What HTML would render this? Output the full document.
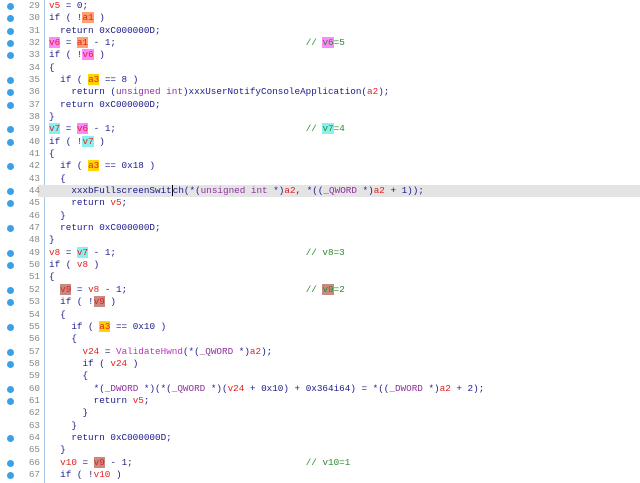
<!DOCTYPE html><html><head><style>
body{margin:0;width:640px;height:483px;background:#fff;overflow:hidden;font-family:"Liberation Mono",monospace;font-size:9.3px;}
.b{position:absolute;left:44px;top:0;width:1px;height:483px;background:#a8c8e8;}
.l{position:absolute;left:0;height:12.34px;line-height:12.34px;width:640px;white-space:pre;}
.d{position:absolute;left:7px;top:3px;width:7px;height:7px;border-radius:50%;background:#3aa0e8;}
.n{position:absolute;left:18px;width:22px;text-align:right;color:#888;}
.c{position:absolute;left:49px;color:#1a1a8c;}
.v{color:#e02020}.t{color:#9030a0}.m{color:#2a8a2a}.f{color:#c030c0}
.o{background:#ffa070}.p{background:#ff88ff}.y{background:#ffd400}.q{background:#88f0f0}.r{background:#c88a80}
.hl{background:#e4e4e4;}
</style></head><body>
<div class="b"></div>
<div class="l" style="top:0px"><span class="d"></span><span class="n">29</span><span class="c"><span class="v">v5</span> = 0;</span></div>
<div class="l" style="top:12.34px"><span class="d"></span><span class="n">30</span><span class="c">if ( !<span class="v o">a1</span> )</span></div>
<div class="l" style="top:24.68px"><span class="d"></span><span class="n">31</span><span class="c">  return 0xC000000D;</span></div>
<div class="l" style="top:37.02px"><span class="d"></span><span class="n">32</span><span class="c"><span class="v p">v6</span> = <span class="v o">a1</span> - 1;                                  <span class="m">// <span class="p">v6</span>=5</span></span></div>
<div class="l" style="top:49.36px"><span class="d"></span><span class="n">33</span><span class="c">if ( !<span class="v p">v6</span> )</span></div>
<div class="l" style="top:61.7px"><span class="n">34</span><span class="c">{</span></div>
<div class="l" style="top:74.04px"><span class="d"></span><span class="n">35</span><span class="c">  if ( <span class="v y">a3</span> == 8 )</span></div>
<div class="l" style="top:86.38px"><span class="d"></span><span class="n">36</span><span class="c">    return (<span class="t">unsigned int</span>)xxxUserNotifyConsoleApplication(<span class="v">a2</span>);</span></div>
<div class="l" style="top:98.72px"><span class="d"></span><span class="n">37</span><span class="c">  return 0xC000000D;</span></div>
<div class="l" style="top:111.06px"><span class="n">38</span><span class="c">}</span></div>
<div class="l" style="top:123.4px"><span class="d"></span><span class="n">39</span><span class="c"><span class="v q">v7</span> = <span class="v p">v6</span> - 1;                                  <span class="m">// <span class="q">v7</span>=4</span></span></div>
<div class="l" style="top:135.74px"><span class="d"></span><span class="n">40</span><span class="c">if ( !<span class="v q">v7</span> )</span></div>
<div class="l" style="top:148.08px"><span class="n">41</span><span class="c">{</span></div>
<div class="l" style="top:160.42px"><span class="d"></span><span class="n">42</span><span class="c">  if ( <span class="v y">a3</span> == 0x18 )</span></div>
<div class="l" style="top:172.76px"><span class="n">43</span><span class="c">  {</span></div>
<div class="l" style="top:185.1px"><div class="hl" style="position:absolute;left:38px;width:602px;height:12.34px"></div><span class="d"></span><span class="n">44</span><span class="c">    xxxbFullscreenSwit<span style="border-left:1px solid #000">c</span>h(*(<span class="t">unsigned int</span> *)<span class="v">a2</span>, *((<span class="t">_QWORD</span> *)<span class="v">a2</span> + 1));</span></div>
<div class="l" style="top:197.44px"><span class="d"></span><span class="n">45</span><span class="c">    return <span class="v">v5</span>;</span></div>
<div class="l" style="top:209.78px"><span class="n">46</span><span class="c">  }</span></div>
<div class="l" style="top:222.12px"><span class="d"></span><span class="n">47</span><span class="c">  return 0xC000000D;</span></div>
<div class="l" style="top:234.46px"><span class="n">48</span><span class="c">}</span></div>
<div class="l" style="top:246.8px"><span class="d"></span><span class="n">49</span><span class="c"><span class="v">v8</span> = <span class="v q">v7</span> - 1;                                  <span class="m">// v8=3</span></span></div>
<div class="l" style="top:259.14px"><span class="d"></span><span class="n">50</span><span class="c">if ( <span class="v">v8</span> )</span></div>
<div class="l" style="top:271.48px"><span class="n">51</span><span class="c">{</span></div>
<div class="l" style="top:283.82px"><span class="d"></span><span class="n">52</span><span class="c">  <span class="v r">v9</span> = <span class="v">v8</span> - 1;                                <span class="m">// <span class="r">v9</span>=2</span></span></div>
<div class="l" style="top:296.16px"><span class="d"></span><span class="n">53</span><span class="c">  if ( !<span class="v r">v9</span> )</span></div>
<div class="l" style="top:308.5px"><span class="n">54</span><span class="c">  {</span></div>
<div class="l" style="top:320.84px"><span class="d"></span><span class="n">55</span><span class="c">    if ( <span class="v y">a3</span> == 0x10 )</span></div>
<div class="l" style="top:333.18px"><span class="n">56</span><span class="c">    {</span></div>
<div class="l" style="top:345.52px"><span class="d"></span><span class="n">57</span><span class="c">      <span class="v">v24</span> = <span class="f">ValidateHwnd</span>(*(<span class="t">_QWORD</span> *)<span class="v">a2</span>);</span></div>
<div class="l" style="top:357.86px"><span class="d"></span><span class="n">58</span><span class="c">      if ( <span class="v">v24</span> )</span></div>
<div class="l" style="top:370.2px"><span class="n">59</span><span class="c">      {</span></div>
<div class="l" style="top:382.54px"><span class="d"></span><span class="n">60</span><span class="c">        *(<span class="t">_DWORD</span> *)(*(<span class="t">_QWORD</span> *)(<span class="v">v24</span> + 0x10) + 0x364i64) = *((<span class="t">_DWORD</span> *)<span class="v">a2</span> + 2);</span></div>
<div class="l" style="top:394.88px"><span class="d"></span><span class="n">61</span><span class="c">        return <span class="v">v5</span>;</span></div>
<div class="l" style="top:407.22px"><span class="n">62</span><span class="c">      }</span></div>
<div class="l" style="top:419.56px"><span class="n">63</span><span class="c">    }</span></div>
<div class="l" style="top:431.9px"><span class="d"></span><span class="n">64</span><span class="c">    return 0xC000000D;</span></div>
<div class="l" style="top:444.24px"><span class="n">65</span><span class="c">  }</span></div>
<div class="l" style="top:456.58px"><span class="d"></span><span class="n">66</span><span class="c">  <span class="v">v10</span> = <span class="v r">v9</span> - 1;                               <span class="m">// v10=1</span></span></div>
<div class="l" style="top:468.92px"><span class="d"></span><span class="n">67</span><span class="c">  if ( !<span class="v">v10</span> )</span></div>
</body></html>
